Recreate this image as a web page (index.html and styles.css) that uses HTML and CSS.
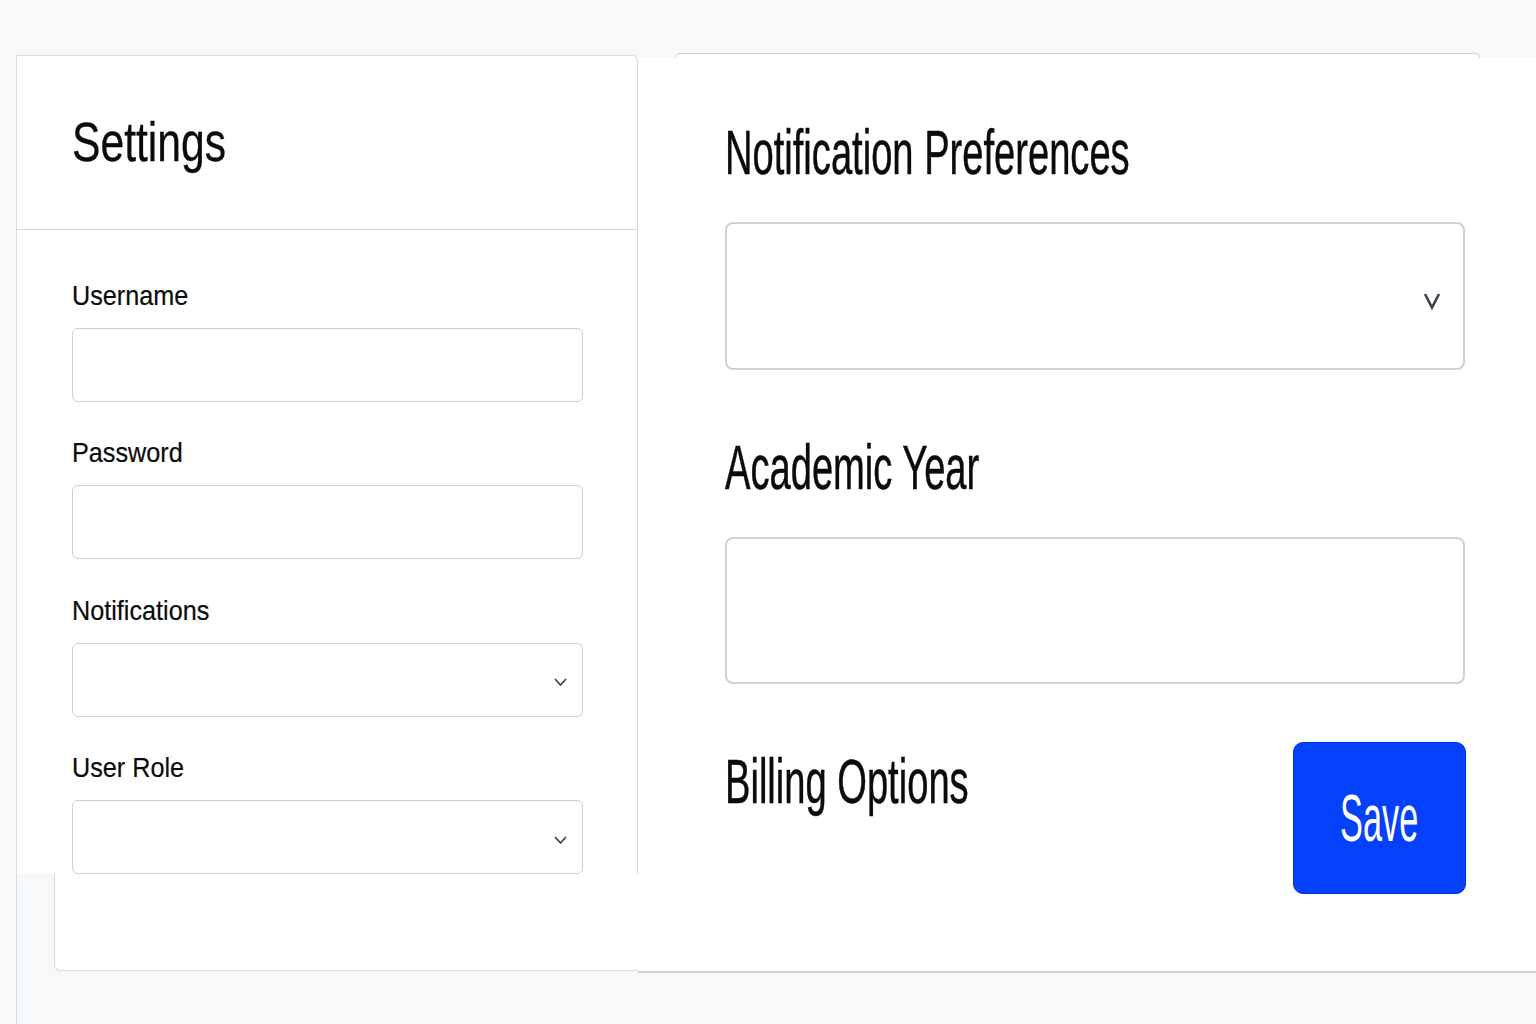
FILE: index.html
```html
<!DOCTYPE html>
<html lang="en">

<head>
  <meta charset="UTF-8">
  <meta name="viewport" content="width=device-width, initial-scale=1.0">
  <title>Settings</title>
  <link rel="stylesheet" href="styles.css">
</head>

<body>
  <div class="page">
    <!-- left column: account settings -->
    <div class="col-left">
      <div class="stack">
        <div class="card">
          <div class="card-head">
            <h1 class="title"><span>Settings</span></h1>
          </div>
          <div class="card-body">
            <div class="field">
              <label class="label" for="username"><span>Username</span></label>
              <input class="input" id="username" type="text">
            </div>
            <div class="field">
              <label class="label" for="password"><span>Password</span></label>
              <input class="input" id="password" type="password">
            </div>
            <div class="field">
              <label class="label" for="notifications"><span>Notifications</span></label>
              <div class="select-wrap">
                <select class="input select" id="notifications"></select>
                <svg class="chev" width="13" height="9" viewBox="0 0 13 9">
                  <path d="M1.5 1.5 L6.5 7 L11.5 1.5" fill="none" stroke="#3a404b" stroke-width="1.7" stroke-linecap="round" stroke-linejoin="round"/>
                </svg>
              </div>
            </div>
            <div class="field">
              <label class="label" for="role"><span>User Role</span></label>
              <div class="select-wrap">
                <select class="input select" id="role"></select>
                <svg class="chev" width="13" height="9" viewBox="0 0 13 9">
                  <path d="M1.5 1.5 L6.5 7 L11.5 1.5" fill="none" stroke="#3a404b" stroke-width="1.7" stroke-linecap="round" stroke-linejoin="round"/>
                </svg>
              </div>
            </div>
          </div>
        </div>
        <div class="card-foot"></div>
      </div>
    </div>

    <!-- right column: preferences -->
    <div class="col-right">
      <div class="cap"></div>
      <div class="panel">
        <h2 class="heading"><span>Notification Preferences</span></h2>
        <div class="select-wrap big">
          <select class="big-input select"></select>
          <svg class="chev-big" width="18" height="19" viewBox="0 0 18 19">
            <path d="M2 3 L9 16.5 L16 3" fill="none" stroke="#3b4250" stroke-width="2.6" stroke-linejoin="miter"/>
          </svg>
        </div>
        <h2 class="heading"><span>Academic Year</span></h2>
        <input class="big-input" type="text">
        <div class="row">
          <h2 class="heading"><span>Billing Options</span></h2>
          <button class="btn-save"><span>Save</span></button>
        </div>
      </div>
    </div>
  </div>
</body>

</html>
```

FILE: styles.css
```css
* {
  padding: 0;
  margin: 0;
  box-sizing: border-box;
}

body {
  background-color: #f7f8fa;
  font-family: "Liberation Sans", Arial, sans-serif;
  color: #0b0b0b;
}

.page {
  display: grid;
  grid-template-columns: 638px 1fr;
  height: 1024px;
  overflow: hidden;
}

/* left */

.col-left {
  padding-top: 55px;
}

.stack {
  margin-left: 16px;
  height: 969px;
  border-left: 1px solid #d3dbe5;
}

.card {
  height: 819px;
  overflow: hidden;
  background-color: #fff;
  border-top: 1px solid #d3dbe5;
  border-right: 1px solid #d3dbe5;
  border-radius: 0 6px 0 0;
}

.card-head {
  height: 174px;
  padding: 59px 0 0 55px;
  border-bottom: 1px solid #d3dbe5;
}

.title {
  font-size: 55px;
  line-height: 55px;
  font-weight: 400;
  -webkit-text-stroke: 0.3px #0b0b0b;
}

.title span {
  display: inline-block;
  transform: scaleX(0.775);
  transform-origin: left;
}

.card-body {
  padding: 52px 54px 0 55px;
}

.field {
  margin-bottom: 37.4px;
}

.field:last-child {
  margin-bottom: 0;
}

.label {
  display: block;
  font-size: 28px;
  line-height: 27px;
  margin-bottom: 19px;
  white-space: nowrap;
  -webkit-text-stroke: 0.2px #0b0b0b;
}

.label span {
  display: inline-block;
  transform: scaleX(0.9);
  transform-origin: left;
}

.input {
  display: block;
  width: 100%;
  height: 74px;
  border: 1px solid #c5d0dc;
  border-radius: 6px;
  background-color: #fff;
  outline: none;
}

.select {
  appearance: none;
  -webkit-appearance: none;
}

.select-wrap {
  display: grid;
}

.select-wrap > * {
  grid-area: 1 / 1;
}

.chev {
  justify-self: end;
  align-self: center;
  margin: 6px 16px 0 0;
}

.card-foot {
  margin-left: 37px;
  height: 97px;
  background-color: #fff;
  border-left: 1px solid #d3dbe5;
  border-bottom: 1px solid #d3dbe5;
  border-radius: 0 0 0 6px;
}

/* right */

.col-right {
  padding-top: 53px;
}

.cap {
  height: 5px;
  margin: 0 56px 0 37px;
  background-color: #fff;
  border: 1px solid #cbd4df;
  border-bottom: none;
  border-radius: 6px 6px 0 0;
}

.panel {
  height: 915px;
  background-color: #fff;
  border-bottom: 2px solid #cbd4df;
  padding: 63px 71px 0 87px;
}

.heading {
  font-size: 63px;
  line-height: 63px;
  font-weight: 400;
  white-space: nowrap;
  -webkit-text-stroke: 0.5px #0b0b0b;
}

.heading span {
  display: inline-block;
  transform: scaleX(0.605);
  transform-origin: left;
}

.panel > .heading:first-child {
  margin-bottom: 38px;
}

.big-input {
  display: block;
  width: 100%;
  height: 148px;
  border: 2px solid #c9d3de;
  border-radius: 8px;
  background-color: #fff;
  outline: none;
}

input.big-input {
  height: 147px;
}

.select-wrap.big {
  margin-bottom: 66px;
}

.select-wrap.big + .heading {
  margin-bottom: 38px;
}

.chev-big {
  justify-self: end;
  align-self: center;
  margin: 9px 24px 0 0;
}

.row {
  display: flex;
  justify-content: space-between;
  align-items: flex-start;
  margin-top: 58px;
}

.row .heading {
  margin-top: 8px;
}

.btn-save {
  width: 173px;
  height: 152px;
  margin-right: -1px;
  background-color: #0541fb;
  border: 1px solid #0030d8;
  border-radius: 10px;
  color: #fff;
  font-family: "Liberation Sans", Arial, sans-serif;
  font-size: 66px;
  line-height: 66px;
  display: flex;
  align-items: center;
  justify-content: center;
  cursor: pointer;
}

.btn-save span {
  display: inline-block;
  transform: scaleX(0.52);
}
```
